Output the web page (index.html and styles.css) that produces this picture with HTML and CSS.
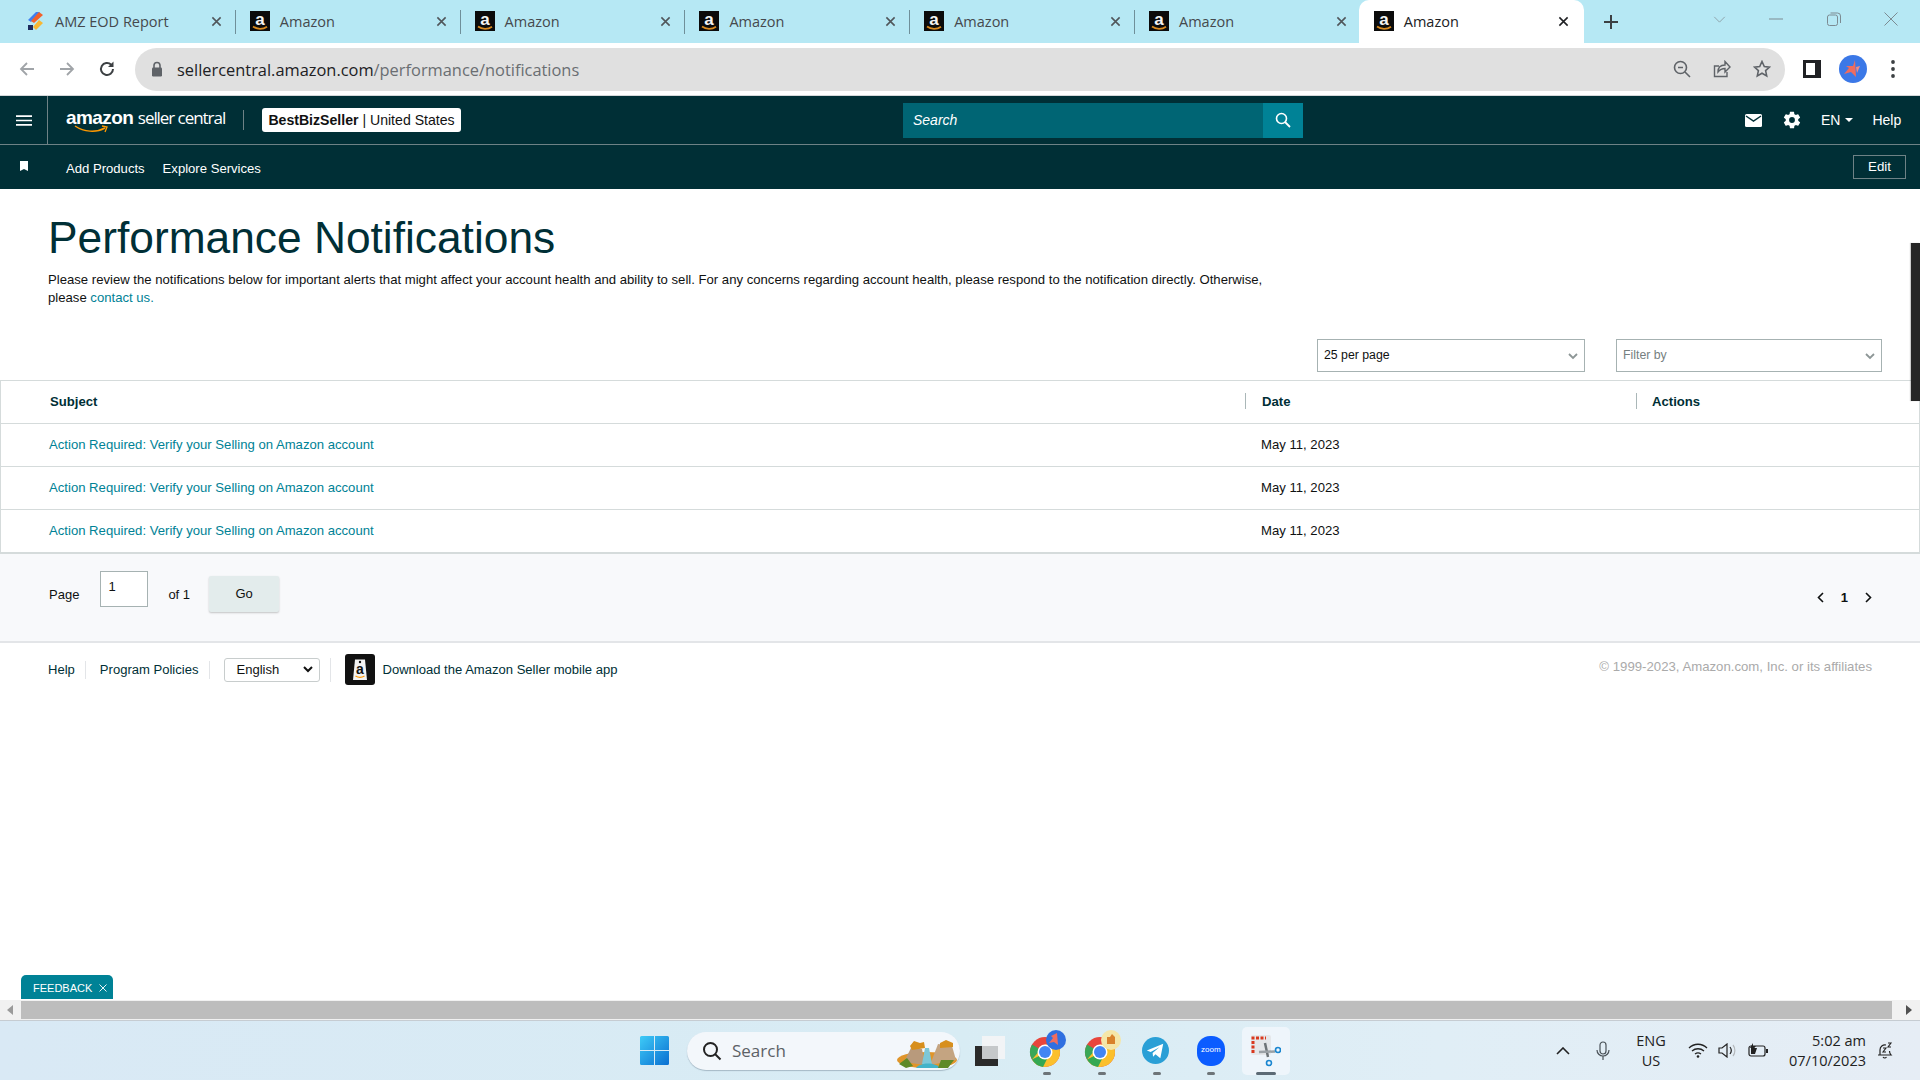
FILE: index.html
```html
<!DOCTYPE html>
<html lang="en">
<head>
<meta charset="utf-8">
<title>Performance Notifications</title>
<link rel="stylesheet" href="styles.css">
</head>
<body>
<svg class="defs" width="0" height="0" aria-hidden="true">
  <symbol id="favbg" viewBox="0 0 20 20">
    <rect width="20" height="20" fill="#0b0b0b"/>
    <path d="M3 15.500c4 3 10 3 14 .2" fill="none" stroke="#d98a1f" stroke-width="1.800"/>
  </symbol>
  <symbol id="x" viewBox="0 0 12 12"><path d="M1.500 1.500l9 9M10.500 1.500l-9 9" fill="none" stroke="currentColor" stroke-width="1.700"/></symbol>
  <symbol id="chromeicon" viewBox="0 0 32 32">
    <circle cx="16" cy="16" r="15" fill="#e8453c"/>
    <path d="M16 16L3 23.500A15 15 0 0 1 3 8.500z" fill="#3aa757"/>
    <path d="M3 23.500A15 15 0 0 0 16 31a15 15 0 0 0 15-15 15 15 0 0 0-2-7.500H16z" fill="#fbc02d"/>
    <path d="M3 23.500A15 15 0 0 0 14 30.900L19.500 20 12 19z" fill="#34a853"/>
    <circle cx="16" cy="16" r="7.500" fill="#fff"/><circle cx="16" cy="16" r="6" fill="#4285f4"/>
  </symbol>
</svg>
<div class="app">
  <div class="tabstrip">
    <div class="tab">
      <svg class="fav" viewBox="0 0 20 20"><path d="M11 1h4l-9 10-3-2z" fill="#3f7ff0"/><path d="M14 1l4 3-9 8-3-2z" fill="#f2602b"/><path d="M14 9l4 3-7 7-3-3z" fill="#f7b733"/><path d="M3 14h5v5H3z" fill="#1d2a5c"/></svg>
      <span class="tab-title">AMZ EOD Report</span>
      <svg class="tab-x"><use href="#x"/></svg>
    </div>
    <div class="tab"><svg class="fav" viewBox="0 0 20 20"><use href="#favbg"/><text x="10" y="13.500" class="fav-a">a</text></svg><span class="tab-title">Amazon</span><svg class="tab-x"><use href="#x"/></svg></div>
    <div class="tab"><svg class="fav" viewBox="0 0 20 20"><use href="#favbg"/><text x="10" y="13.500" class="fav-a">a</text></svg><span class="tab-title">Amazon</span><svg class="tab-x"><use href="#x"/></svg></div>
    <div class="tab"><svg class="fav" viewBox="0 0 20 20"><use href="#favbg"/><text x="10" y="13.500" class="fav-a">a</text></svg><span class="tab-title">Amazon</span><svg class="tab-x"><use href="#x"/></svg></div>
    <div class="tab"><svg class="fav" viewBox="0 0 20 20"><use href="#favbg"/><text x="10" y="13.500" class="fav-a">a</text></svg><span class="tab-title">Amazon</span><svg class="tab-x"><use href="#x"/></svg></div>
    <div class="tab tab-last"><svg class="fav" viewBox="0 0 20 20"><use href="#favbg"/><text x="10" y="13.500" class="fav-a">a</text></svg><span class="tab-title">Amazon</span><svg class="tab-x"><use href="#x"/></svg></div>
    <div class="tab tab-active"><svg class="fav" viewBox="0 0 20 20"><use href="#favbg"/><text x="10" y="13.500" class="fav-a">a</text></svg><span class="tab-title">Amazon</span><svg class="tab-x"><use href="#x"/></svg></div>
    <svg class="newtab" viewBox="0 0 16 16"><path d="M8 1v14M1 8h14" fill="none" stroke="#3c4043" stroke-width="2"/></svg>
    <div class="winctl">
      <svg class="wc wc-chev" viewBox="0 0 14 8"><path d="M1 1l6 6 6-6" fill="none" stroke="#8a9ba3" stroke-width="1"/></svg>
      <svg class="wc wc-min" viewBox="0 0 14 2"><path d="M0 1h14" stroke="#7c8b92" stroke-width="1"/></svg>
      <svg class="wc wc-max" viewBox="0 0 14 14"><rect x=".5" y="3" width="10" height="10.500" rx="2" fill="none" stroke="#7c8b92"/><path d="M3.500 1h7a3 3 0 0 1 3 3v7" fill="none" stroke="#7c8b92"/></svg>
      <svg class="wc wc-close" viewBox="0 0 14 14"><path d="M.5.5l13 13M13.500.5l-13 13" stroke="#7c8b92" stroke-width="1"/></svg>
    </div>
  </div>

  <div class="toolbar">
    <svg class="tb-btn" viewBox="0 0 18 18"><path d="M16 9H3M9 3L3 9l6 6" fill="none" stroke="#a0a4a8" stroke-width="1.800"/></svg>
    <svg class="tb-btn" viewBox="0 0 18 18"><path d="M2 9h13M9 3l6 6-6 6" fill="none" stroke="#a0a4a8" stroke-width="1.800"/></svg>
    <svg class="tb-btn" viewBox="0 0 18 18"><path d="M15 9a6 6 0 1 1-1.800-4.300" fill="none" stroke="#3c4043" stroke-width="2"/><path d="M15.500 1.500V7H10z" fill="#3c4043"/></svg>
    <div class="omnibox">
      <svg class="lock" viewBox="0 0 12 16"><path d="M3 7V4.500a3 3 0 0 1 6 0V7" fill="none" stroke="#5f6368" stroke-width="1.600"/><rect x="1" y="6.500" width="10" height="9" rx="1.200" fill="#5f6368"/></svg>
      <span class="url"><span class="url-host">sellercentral.amazon.com</span>/performance/notifications</span>
      <svg class="om-icon" viewBox="0 0 18 18"><circle cx="7.500" cy="7.500" r="6" fill="none" stroke="#5f6368" stroke-width="1.600"/><path d="M12 12l5 5M5 7.500h5" fill="none" stroke="#5f6368" stroke-width="1.600"/></svg>
      <svg class="om-icon" viewBox="0 0 18 18"><path d="M14 12v4.500H1.500V6H6" fill="none" stroke="#5f6368" stroke-width="1.400"/><path d="M5 12c0-5 3-7 7-7V1.500l5 5.500-5 5V8.500c-3 0-5 1-7 3.500z" fill="none" stroke="#5f6368" stroke-width="1.400"/></svg>
      <svg class="om-icon" viewBox="0 0 18 18"><path d="M9 1.500l2.300 5 5.200.6-3.900 3.500 1.100 5.300L9 13.200l-4.700 2.700 1.100-5.300L1.500 7.100l5.200-.6z" fill="none" stroke="#5f6368" stroke-width="1.600"/></svg>
    </div>
    <svg class="panel" viewBox="0 0 18 18"><rect width="18" height="18" fill="#202124"/><rect x="3" y="3" width="9" height="12" fill="#fff"/></svg>
    <svg class="avatar" viewBox="0 0 28 28"><circle cx="14" cy="14" r="14" fill="#3b78e7"/><path d="M16 5l1 17-5-5-7 2 5-6-3-2 7 0z" fill="#ef6c5e"/><path d="M17 12l4-1-3 7z" fill="#f28b82"/></svg>
    <svg class="kebab" viewBox="0 0 4 18"><circle cx="2" cy="2" r="1.900" fill="#3c4043"/><circle cx="2" cy="9" r="1.900" fill="#3c4043"/><circle cx="2" cy="16" r="1.900" fill="#3c4043"/></svg>
  </div>

  <header class="nav">
    <div class="nav-top">
      <div class="burger"><svg viewBox="0 0 16 11" class="burger-icon"><path d="M0 1.200h16M0 5.500h16M0 9.800h16" stroke="#fff" stroke-width="1.700"/></svg></div>
      <div class="brand">
        <div class="logo">
          <span class="logo-am">amazon</span> <span class="logo-sc">seller central</span>
          <svg class="logo-smile" viewBox="0 0 34 9"><path d="M1 1c9 6 21 7 30 2" fill="none" stroke="#f90" stroke-width="1.500"/><path d="M28 1l5 1-2 5" fill="none" stroke="#f90" stroke-width="1.300"/></svg>
        </div>
        <span class="brand-sep"></span>
        <div class="acct"><b>BestBizSeller</b> | United States</div>
      </div>
      <div class="search"><span class="search-input">Search</span><span class="search-btn"><svg viewBox="0 0 16 16" class="search-icon"><circle cx="6.500" cy="6.500" r="5" fill="none" stroke="#fff" stroke-width="1.600"/><path d="M10 10l5 5" stroke="#fff" stroke-width="1.800"/></svg></span></div>
      <div class="nav-right">
        <svg class="nav-mail" viewBox="0 0 17 13"><rect width="17" height="13" rx="1.500" fill="#fff"/><path d="M1 2l7.500 5L16 2" fill="none" stroke="#002f36" stroke-width="1.500"/></svg>
        <svg class="nav-gear" viewBox="0 0 24 24"><path fill="#fff" fill-rule="evenodd" d="M19.400 13c.05-.3.1-.65.1-1s-.05-.7-.1-1l2.100-1.650a.5.5 0 0 0 .12-.64l-2-3.460a.5.5 0 0 0-.6-.22l-2.500 1a7.300 7.300 0 0 0-1.700-1l-.37-2.650A.5.5 0 0 0 14 2h-4a.5.500 0 0 0-.5.420l-.37 2.650c-.6.250-1.170.6-1.700 1l-2.500-1a.5.5 0 0 0-.6.220l-2 3.460a.5.5 0 0 0 .12.640L4.560 11c-.05.320-.1.660-.1 1s.05.680.1 1l-2.110 1.650a.5.5 0 0 0-.12.640l2 3.460c.12.220.38.300.6.220l2.500-1c.52.400 1.080.740 1.700 1l.37 2.650A.5.5 0 0 0 10 22h4a.5.500 0 0 0 .5-.42l.37-2.650c.6-.26 1.180-.6 1.700-1l2.500 1c.23.080.48 0 .6-.22l2-3.460a.5.5 0 0 0-.12-.64zM12 15.500a3.500 3.500 0 1 1 0-7 3.500 3.500 0 0 1 0 7z"/></svg>
        <span class="nav-lang">EN</span><span class="nav-caret"></span>
        <span class="nav-help">Help</span>
      </div>
    </div>
    <div class="nav-bottom">
      <svg class="bookmark" viewBox="0 0 8 10"><path d="M0 0h8v10L4 8 0 10z" fill="#fff"/></svg>
      <span class="nav-link">Add Products</span>
      <span class="nav-link">Explore Services</span>
      <span class="edit">Edit</span>
    </div>
  </header>

  <main class="page">
    <h1 class="title">Performance Notifications</h1>
    <p class="intro">Please review the notifications below for important alerts that might affect your account health and ability to sell. For any concerns regarding account health, please respond to the notification directly. Otherwise, please <a class="link">contact us.</a></p>
    <div class="filters">
      <div class="sel sel-page"><span>25 per page</span><svg class="sel-chev" viewBox="0 0 10 7"><path d="M1 1l4 4 4-4" fill="none" stroke="#8d9696" stroke-width="1.800"/></svg></div>
      <div class="sel sel-filter"><span class="muted">Filter by</span><svg class="sel-chev" viewBox="0 0 10 7"><path d="M1 1l4 4 4-4" fill="none" stroke="#8d9696" stroke-width="1.800"/></svg></div>
    </div>
    <div class="table">
      <div class="row row-head">
        <div class="cell cell-subject th">Subject</div>
        <div class="cell cell-date th sep">Date</div>
        <div class="cell cell-actions th sep">Actions</div>
      </div>
      <div class="row">
        <div class="cell cell-subject"><a class="link">Action Required: Verify your Selling on Amazon account</a></div>
        <div class="cell cell-date">May 11, 2023</div>
        <div class="cell cell-actions"></div>
      </div>
      <div class="row">
        <div class="cell cell-subject"><a class="link">Action Required: Verify your Selling on Amazon account</a></div>
        <div class="cell cell-date">May 11, 2023</div>
        <div class="cell cell-actions"></div>
      </div>
      <div class="row">
        <div class="cell cell-subject"><a class="link">Action Required: Verify your Selling on Amazon account</a></div>
        <div class="cell cell-date">May 11, 2023</div>
        <div class="cell cell-actions"></div>
      </div>
    </div>
    <div class="pager">
      <span class="pg-label">Page</span>
      <span class="pg-input">1</span>
      <span class="pg-of">of 1</span>
      <span class="pg-go">Go</span>
      <div class="pg-nums">
        <svg class="pg-arrow" viewBox="0 0 7 11"><path d="M6 1L1.500 5.500 6 10" fill="none" stroke="#0f1111" stroke-width="1.600"/></svg>
        <b class="pg-num">1</b>
        <svg class="pg-arrow" viewBox="0 0 7 11"><path d="M1 1l4.500 4.500L1 10" fill="none" stroke="#0f1111" stroke-width="1.600"/></svg>
      </div>
    </div>
    <footer class="foot">
      <span class="foot-link foot-help">Help</span>
      <span class="foot-link foot-pol">Program Policies</span>
      <span class="foot-lang"><span>English</span><svg class="foot-chev" viewBox="0 0 10 7"><path d="M1 1l4 4 4-4" fill="none" stroke="#111" stroke-width="2"/></svg></span>
      <span class="foot-sep"></span>
      <svg class="app-icon" viewBox="0 0 30 31"><rect width="30" height="31" rx="3" fill="#111"/><path d="M10 5.500h10l2 20.500H8z" fill="#f3f3f3"/><circle cx="15" cy="8" r="1.200" fill="#111"/><text x="15" y="20" class="app-a">a</text><path d="M10.500 22c3 1.800 6 1.800 9 0" fill="none" stroke="#f90" stroke-width="1.200"/></svg>
      <span class="foot-link">Download the Amazon Seller mobile app</span>
      <span class="copyright">© 1999-2023, Amazon.com, Inc. or its affiliates</span>
    </footer>
    <div class="feedback">FEEDBACK <svg class="fb-x" viewBox="0 0 8 8"><path d="M.5.5l7 7M7.500.5l-7 7" stroke="#e8f4f6" stroke-width="1"/></svg></div>
    <div class="overlay-bar"></div>
  </main>

  <div class="hscroll">
    <span class="hs-arrow hs-left"></span>
    <span class="hs-thumb"></span>
    <span class="hs-arrow hs-right"></span>
  </div>

  <div class="taskbar">
    <div class="task-center">
      <svg class="win" viewBox="0 0 29 29"><defs><linearGradient id="wg" x1="0" y1="0" x2="1" y2="1"><stop offset="0" stop-color="#3ecbf7"/><stop offset="1" stop-color="#0a6fd1"/></linearGradient></defs><path fill="url(#wg)" d="M0 1.500A1.500 1.500 0 0 1 1.500 0H14v14H0zM15 0h12.500A1.500 1.500 0 0 1 29 1.500V14H15zM0 15h14v14H1.500A1.500 1.500 0 0 1 0 27.500zM15 15h14v12.500a1.500 1.500 0 0 1-1.500 1.500H15z"/></svg>
      <div class="task-search">
        <svg class="ts-icon" viewBox="0 0 20 20"><circle cx="8.500" cy="8.500" r="6.500" fill="none" stroke="#222" stroke-width="2"/><path d="M13 13l5.500 5.500" stroke="#222" stroke-width="2"/></svg>
        <span class="ts-text">Search</span>
        <svg class="ts-art" viewBox="0 0 62 30"><ellipse cx="31" cy="22" rx="30" ry="8" fill="#e0952a"/><path d="M8 24L16 8l10 3 3 16z" fill="#b89a7c"/><path d="M34 27L42 6l14 2 4 14z" fill="#c4a481"/><path d="M14 8l4-5 6 2 4-1 1 6-13 2zM44 5l6-3 7 3v4l-13 1z" fill="#d78f1d"/><path d="M29 10h4l3 16h-10z" fill="#7cc7d8"/><path d="M20 30c4-6 20-6 24 0z" fill="#42b3c9"/><path d="M42 30l3-8 13 0-6 8zM3 26l8-6 6 8-7 2z" fill="#5f8a28"/></svg>
      </div>
      <svg class="files" viewBox="0 0 30 30"><rect x="7" y="0" width="23" height="23" fill="#f2f4f6"/><rect x="0" y="10" width="23" height="20" fill="#2a2a2a"/><rect x="7" y="10" width="16" height="13" fill="#c5c8ca"/></svg>
      <div class="task-app">
        <svg class="chrome" viewBox="0 0 32 32"><use href="#chromeicon"/></svg>
        <svg class="badge" viewBox="0 0 20 20"><circle cx="10" cy="10" r="10" fill="#2f6fe0"/><path d="M11 3l1 12-4-3-5 1 4-5-2-2z" fill="#ef6c5e"/></svg>
        <i class="dot"></i>
      </div>
      <div class="task-app">
        <svg class="chrome" viewBox="0 0 32 32"><use href="#chromeicon"/></svg>
        <svg class="badge" viewBox="0 0 20 20"><circle cx="10" cy="10" r="10" fill="#f5e6a8"/><path d="M6 7h3l2-3 3 3v7H6z" fill="#d9822b"/></svg>
        <i class="dot"></i>
      </div>
      <div class="task-app">
        <svg class="tg" viewBox="0 0 28 28"><circle cx="14" cy="14" r="14" fill="#2a9fd6"/><path d="M5 14l17-7-3 15-5-4-2.500 2.500-.5-4 7-6-9 5z" fill="#fff"/></svg>
        <i class="dot"></i>
      </div>
      <div class="task-app">
        <span class="zoom">zoom</span>
        <i class="dot"></i>
      </div>
      <div class="task-app task-active">
        <svg class="snip" viewBox="0 0 30 32"><rect x="0" y="0" width="20" height="20" rx="2" fill="#e4e7ea"/><path d="M2 18V3h13" fill="none" stroke="#d9381e" stroke-width="3" stroke-dasharray="3 1.500"/><path d="M14 8l3 14" stroke="#6d7478" stroke-width="2.500"/><path d="M8 17l16-.5" stroke="#9aa1a6" stroke-width="2.500"/><circle cx="27" cy="15" r="2.500" fill="none" stroke="#1a86d0" stroke-width="1.600"/><circle cx="18" cy="28" r="2.500" fill="none" stroke="#1a86d0" stroke-width="1.600"/></svg>
        <i class="dot dot-wide"></i>
      </div>
    </div>
    <div class="tray">
      <svg class="tr-chev" viewBox="0 0 14 8"><path d="M1 7l6-6 6 6" fill="none" stroke="#222" stroke-width="1.600"/></svg>
      <svg class="tr-mic" viewBox="0 0 14 20"><rect x="4" y="1" width="6" height="12" rx="3" fill="none" stroke="#4a5258" stroke-width="1.200"/><path d="M1 9a6 6 0 0 0 12 0M7 15v4" fill="none" stroke="#4a5258" stroke-width="1.200"/></svg>
      <div class="tr-lang"><span>ENG</span><span>US</span></div>
      <svg class="tr-wifi" viewBox="0 0 20 15"><path d="M1 5c5-5 13-5 18 0M4 8c3.500-3 8.500-3 12 0M7 11c2-1.500 4-1.500 6 0" fill="none" stroke="#222" stroke-width="1.300"/><circle cx="10" cy="13.500" r="1.300" fill="#222"/></svg>
      <svg class="tr-vol" viewBox="0 0 20 15"><path d="M1 5h3l5-4v13l-5-4H1z" fill="none" stroke="#222" stroke-width="1.200"/><path d="M12 4c1.500 2 1.500 5 0 7" fill="none" stroke="#222" stroke-width="1.200"/><path d="M15 2c2.500 3 2.500 8 0 11" fill="none" stroke="#b5b9bc" stroke-width="1.200"/></svg>
      <svg class="tr-bat" viewBox="0 0 21 15"><rect x="1" y="3" width="16" height="10" rx="2" fill="none" stroke="#222" stroke-width="1.200"/><rect x="18" y="6" width="2" height="4" fill="#222"/><path d="M3 11V5h6l-2 6z" fill="#222"/><path d="M5 0L2 5h3L3 9l5-6H5z" fill="#222"/></svg>
      <div class="tr-clock"><span>5:02 am</span><span>07/10/2023</span></div>
      <svg class="tr-bell" viewBox="0 0 17 17"><path d="M3 13V8a5 5 0 0 1 6-5M1 13h13c-1-1-1.500-2-1.500-4M6 15c1 1.300 2.500 1.300 3.500 0" fill="none" stroke="#222" stroke-width="1.200"/><path d="M6 6h3L6 10h3M11 1h3l-3 4h3" fill="none" stroke="#222" stroke-width="1.100"/></svg>
    </div>
  </div>
</div>
</body>
</html>
```
FILE: styles.css
```css
* { box-sizing: border-box; }
html, body { margin: 0; height: 100%; overflow: hidden; background: #fff; }
body { font-family: "Liberation Sans", Arial, sans-serif; font-size: 13px; color: #0f1111; }
.defs { position: absolute; }
svg { display: block; flex: none; }
.app { width: 1920px; height: 1080px; display: flex; flex-direction: column; overflow: hidden; }

/* tabs */
.tabstrip { height: 43px; background: #b6e8f4; display: flex; align-items: center; padding-left: 11px; flex: none; }
.tab { width: 224.800px; height: 24px; display: flex; align-items: center; padding-left: 14px; border-right: 1px solid #6f8f99; font: 14.500px "Open Sans", sans-serif; color: #45494d; padding-bottom: 1px; }
.tab-last { border-right: none; }
.fav { width: 20px; height: 20px; }
.fav-a { font: 700 17px "Liberation Sans", sans-serif; fill: #f4f4f4; text-anchor: middle; }
.tab-title { margin-left: 10px; flex: 1; white-space: nowrap; }
.tab-x { width: 11px; height: 11px; margin-right: 13px; color: #50565a; }
.tab-active { background: #fff; height: 43px; align-self: flex-end; border-radius: 10px 10px 0 0; border: none; width: 225px; color: #202124; padding-left: 15px; margin-left: -1px; }
.tab-active .tab-x { color: #202124; margin-right: 15px; }
.newtab { width: 16px; height: 16px; margin-left: 19px; }
.winctl { margin-left: auto; display: flex; align-items: center; height: 100%; padding-bottom: 5px; }
.wc-chev { width: 13px; height: 7px; margin-right: 43px; }
.wc-min { width: 14px; height: 2px; margin-right: 44px; }
.wc-max { width: 14px; height: 14px; margin-right: 43px; }
.wc-close { width: 14px; height: 14px; margin-right: 22px; }

/* toolbar */
.toolbar { height: 53px; background: #fff; border-bottom: 1px solid #d5d8da; display: flex; align-items: center; padding: 0 0 0 18px; flex: none; }
.tb-btn { width: 18px; height: 18px; margin-right: 22px; }
.tb-btn:nth-child(3) { margin-right: 19px; }
.omnibox { width: 1650px; height: 43px; border-radius: 22px; background: #e0e0e0; display: flex; align-items: center; padding-left: 16px; margin-right: 18px; }
.lock { width: 12px; height: 16px; margin-right: 14px; }
.url { font: 16.400px "Open Sans", sans-serif; color: #6a6e72; flex: 1; white-space: nowrap; padding-top: 1px; }
.url-host { color: #202124; }
.om-icon { width: 18px; height: 18px; margin-right: 22px; }
.om-icon:last-child { margin-right: 14px; }
.panel { width: 18px; height: 18px; margin-right: 18px; }
.avatar { width: 28px; height: 28px; margin-right: 24px; }
.kebab { width: 4px; height: 18px; }

/* nav */
.nav { background: #002f36; color: #fff; flex: none; }
.nav-top { height: 49px; display: flex; align-items: center; border-bottom: 1px solid #6e8286; }
.burger { width: 48px; height: 100%; border-right: 1px solid #6e8286; display: flex; align-items: center; padding-left: 16px; }
.burger-icon { width: 16px; height: 11px; }
.brand { width: 855px; display: flex; align-items: center; padding-left: 18px; }
.logo { position: relative; width: 160px; white-space: nowrap; font-size: 19px; line-height: 24px; padding-bottom: 4px; letter-spacing: -.6px; }
.logo-am { font-weight: 700; }
.logo-sc { font-family: "Open Sans", sans-serif; font-size: 17px; letter-spacing: -1.050px; }
.logo-smile { position: absolute; left: 8px; top: 19px; width: 34px; height: 9px; }
.brand-sep { width: 1px; height: 20px; background: #6e8286; margin: 0 18px 0 17px; }
.acct { background: #fff; color: #111; height: 24px; line-height: 24px; width: 199px; border-radius: 3px; text-align: center; font-size: 14.100px; white-space: nowrap; }
.search { width: 400px; height: 35px; background: #006574; display: flex; }
.search-input { flex: 1; font-style: italic; font-size: 14px; line-height: 35px; padding-left: 10px; }
.search-btn { width: 40px; background: #008296; display: flex; align-items: center; justify-content: center; }
.search-icon { width: 16px; height: 16px; }
.nav-right { flex: 1; display: flex; align-items: center; padding-right: 13px; font-size: 14px; }
.nav-mail { width: 17px; height: 13px; margin-left: 442px; }
.nav-gear { width: 20px; height: 20px; margin-left: 20px; }
.nav-lang { margin-left: 19px; }
.nav-caret { width: 0; height: 0; border: 4px solid transparent; border-top: 4px solid #fff; border-bottom: 0; margin-left: 5px; }
.nav-help { margin-left: 19px; }
.nav-bottom { height: 44px; display: flex; align-items: center; position: relative; }
.bookmark { width: 8px; height: 10px; margin: -2px 38px 0 20px; }
.nav-link { margin-right: 18px; font-size: 13.100px; padding-top: 2px; }
.edit { margin-left: auto; margin-right: 14px; width: 53px; height: 24px; border: 1px solid #6e8286; text-align: center; line-height: 22px; font-size: 13.300px; margin-top: -1px; }

/* page */
.page { flex: 1; position: relative; min-height: 0; }
.title { margin: 0; padding: 24px 48px 0; font-weight: 400; font-size: 44.300px; line-height: 50px; color: #002f36; white-space: nowrap; }
.intro { margin: 8px 0 0 48px; width: 1240px; font-size: 13.140px; line-height: 18px; color: #0f1111; }
.link { color: #008296; }
.filters { display: flex; margin: 32px 0 0 1317px; height: 34px; }
.sel { height: 33px; border: 1px solid #a6b2b2; display: flex; align-items: center; padding-left: 6px; justify-content: space-between; font-size: 12.300px; padding-bottom: 2px; }
.sel-page { width: 268px; }
.sel-filter { width: 266px; margin-left: 31px; }
.muted { color: #767f7f; }
.sel-chev { width: 10px; height: 7px; margin: 4px 6px 0 0; }
.table { margin-top: 7px; border: 1px solid #d5dbdb; border-bottom-width: 2px; }
.row { display: flex; height: 43px; border-top: 1px solid #d5dbdb; align-items: center; font-size: 13.130px; }
.row:first-child { border-top: none; height: 42px; }
.cell { height: 100%; display: flex; align-items: center; position: relative; padding-bottom: 2px; }
.cell-subject { width: 1244px; padding-left: 48px; }
.cell-date { width: 391px; padding-left: 16px; }
.cell-actions { flex: 1; padding-left: 16px; }
.th { font-weight: 700; padding-left: 17px; color: #002f36; }
.cell-subject.th { padding-left: 49px; }
.cell-actions.th { padding-left: 16px; }
.sep::before { content: ""; position: absolute; left: 0; top: 12px; height: 16px; width: 1px; background: #aab7b8; }
.pager { height: 89px; background: #f8f9fb; border-bottom: 2px solid #e3e5e8; display: flex; align-items: center; padding: 0 0 5px 49px; position: relative; }
.pg-label { margin-top: -2px; }
.pg-input { width: 48px; height: 36px; margin: -13px 0 0 21px; border: 1px solid #a6b2b2; background: #fff; padding: 7px 0 0 8px; font-size: 13px; }
.pg-input { padding-left: 7px; }
.pg-of { margin-left: 20px; margin-top: -2px; }
.pg-go { width: 70px; height: 36px; margin: -2px 0 0 19px; background: #e3ecec; border-radius: 2px; box-shadow: 0 1px 2px rgba(0,0,0,.22); text-align: center; line-height: 35px; }
.pg-nums { margin-left: auto; margin-right: 48px; margin-top: 4px; display: flex; align-items: center; }
.pg-arrow { width: 7px; height: 11px; }
.pg-num { margin: 0 17px; font-size: 13px; }
.foot { display: flex; align-items: center; height: 44px; padding-left: 48px; margin-top: 5px; font-size: 13.050px; color: #002f36; position: relative; padding-bottom: 1px; }
.foot-link { white-space: nowrap; }
.foot-help { padding-right: 10px; border-right: 1px solid #e3e5e8; line-height: 18px; }
.foot-pol { padding: 0 11px 0 14px; border-right: 1px solid #e3e5e8; line-height: 18px; }
.foot-lang { width: 96px; height: 24px; margin: 0 10px 0 14px; border: 1px solid #c8cdcd; border-radius: 3px; display: flex; align-items: center; justify-content: space-between; padding: 0 6px 0 11px; color: #111; }
.foot-sep { width: 1px; height: 24px; background: #e3e5e8; }
.foot-chev { width: 10px; height: 7px; }
.app-icon { width: 30px; height: 31px; margin: 0 7px 0 14px; }
.app-a { font: 700 14px "Liberation Sans", sans-serif; fill: #111; text-anchor: middle; }
.copyright { margin-left: auto; margin-right: 48px; color: #aaa; font-size: 13.200px; margin-top: -7px; }
.feedback { position: absolute; left: 21px; bottom: 1px; width: 92px; height: 24px; background: #008296; color: #fff; border-radius: 5px 5px 0 0; font-size: 11px; line-height: 24px; padding: 1px 0 0 12px; display: flex; align-items: center; gap: 7px; }
.fb-x { width: 8px; height: 8px; }
.overlay-bar { position: absolute; right: 0; top: 54px; width: 9px; height: 158px; background: #262626; box-shadow: -1px 0 1px rgba(0,0,0,.2); }

/* scrollbar */
.hscroll { height: 20px; background: #f1f1f1; display: flex; align-items: center; flex: none; padding: 0 6px 0 7px; border-bottom: 1px solid #f1f1f1; }
.hs-arrow { width: 0; height: 0; border: 5px solid transparent; border-left-width: 0; border-right: 6px solid #9a9a9a; }
.hs-thumb { width: 1871px; height: 18px; background: #bdbdbd; margin: 0 14px 0 8px; }
.hs-right { border-right-width: 0; border-left: 6px solid #505050; }

/* taskbar */
.taskbar { flex: none; height: 60px; background: linear-gradient(90deg, #d9e9f5 0%, #d8ecf4 50%, #e0eef6 75%, #e6edf5 100%); border-top: 1px solid #c6ccd2; display: flex; align-items: center; position: relative; }
.task-center { display: flex; align-items: center; padding-left: 640px; }
.win { width: 29px; height: 29px; }
.task-search { width: 273px; height: 38px; margin-left: 18px; border-radius: 19px; background: #f3f7fb; box-shadow: 0 1px 1px rgba(90,110,130,.4); display: flex; align-items: center; padding-left: 15px; position: relative; }
.ts-icon { width: 20px; height: 20px; }
.ts-text { font: 17px "Open Sans", sans-serif; color: #5c6166; margin-left: 10px; }
.ts-art { position: absolute; right: 2px; top: 6px; width: 62px; height: 30px; }
.files { width: 30px; height: 30px; margin: 0 14px 0 15px; }
.task-app { width: 54.800px; height: 48px; position: relative; display: flex; align-items: center; justify-content: center; }
.task-active { width: 48px; margin-left: 4px; background: #eef5fb; border-radius: 5px; }
.chrome { width: 32px; height: 32px; margin: 2px 2px 0 0; }
.badge { position: absolute; left: 27px; top: 3px; width: 20px; height: 20px; }
.dot { position: absolute; bottom: 0; left: 24px; width: 8px; height: 3px; border-radius: 2px; background: #6d7478; }
.dot-wide { left: 14px; width: 20px; background: #5c6a75; }
.tg { width: 27px; height: 27px; }
.zoom { width: 28px; height: 30px; border-radius: 13px; background: #0b5cff; color: #fff; font-size: 8px; text-align: center; line-height: 28px; font-family: "Liberation Sans", sans-serif; }
.snip { width: 30px; height: 32px; }
.tray { position: absolute; left: 0; top: 0; right: 0; bottom: 0; pointer-events: none; display: flex; align-items: center; padding-left: 1556px; }
.tr-chev { width: 14px; height: 8px; }
.tr-mic { width: 14px; height: 20px; margin-left: 26px; }
.tr-lang { margin-left: 27px; width: 28px; display: flex; flex-direction: column; align-items: center; font: 14.500px/20px "Open Sans", sans-serif; color: #222; }
.tr-wifi { width: 20px; height: 15px; margin-left: 23px; }
.tr-vol { width: 20px; height: 15px; margin-left: 10px; }
.tr-bat { width: 21px; height: 15px; margin-left: 10px; }
.tr-clock { width: 90px; margin-left: 7px; display: flex; flex-direction: column; align-items: flex-end; font: 14.500px/20px "Open Sans", sans-serif; color: #222; }
.tr-bell { width: 17px; height: 17px; margin-left: 11px; }
```
